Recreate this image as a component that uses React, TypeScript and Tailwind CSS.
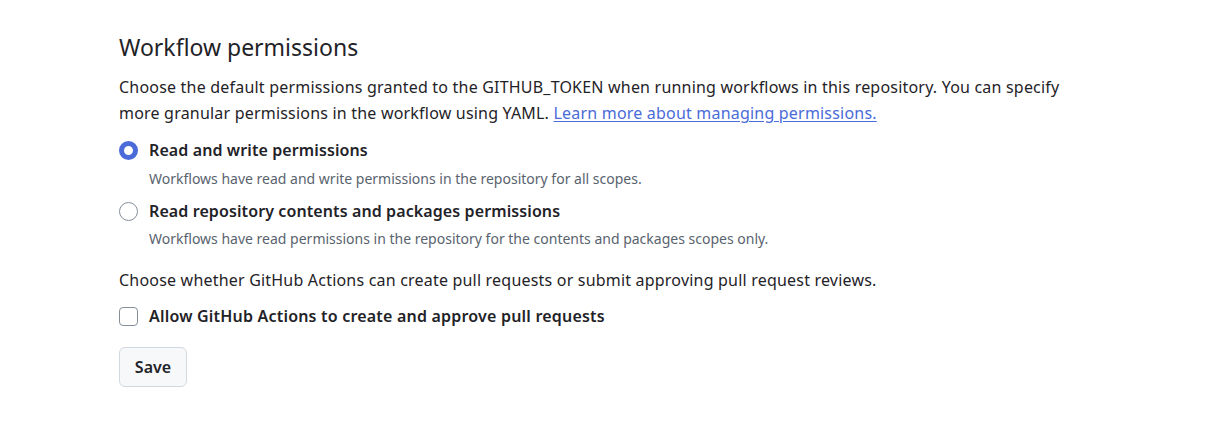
import React from "react";

export default function App() {
  return (
    <div className="w-[1216px] h-[437px] bg-white text-[#1f2328]" style={{ fontFamily: '"Noto Sans", "Open Sans", sans-serif' }}>
      <div className="pl-[119px] pt-[29px] w-[1100px]">
        <h2 className="text-[23px] leading-[36px] font-normal text-[#1f2328]">Workflow permissions</h2>
        <p className="mt-[9px] text-[16px] leading-[26px] tracking-[0.2px] w-[960px]">
          Choose the default permissions granted to the GITHUB_TOKEN when running workflows in this repository. You can specify more granular permissions in the workflow using YAML.{" "}
          <a className="text-[#4a6bd8] underline underline-offset-2">Learn more about managing permissions.</a>
        </p>
        <div className="mt-[12px] flex flex-col">
          <label className="flex items-center gap-[11px] h-[24px]">
            <span className="w-[19px] h-[19px] rounded-full border-[5px] border-[#4a6bd8] bg-white box-border" />
            <span className="text-[16px] font-semibold tracking-[0.1px]">Read and write permissions</span>
          </label>
          <div className="pl-[30px] mt-[7px] text-[14px] leading-[20px] text-[#59636e]">Workflows have read and write permissions in the repository for all scopes.</div>
          <label className="mt-[10px] flex items-center gap-[11px] h-[24px]">
            <span className="w-[19px] h-[19px] rounded-full border border-[#858f99] bg-white box-border" />
            <span className="text-[16px] font-semibold tracking-[0.1px]">Read repository contents and packages permissions</span>
          </label>
          <div className="pl-[30px] mt-[6px] text-[14px] leading-[20px] text-[#59636e]">Workflows have read permissions in the repository for the contents and packages scopes only.</div>
        </div>
        <p className="mt-[18px] text-[16px] leading-[26px] tracking-[0.2px]">Choose whether GitHub Actions can create pull requests or submit approving pull request reviews.</p>
        <label className="mt-[11px] flex items-center gap-[11px] h-[24px]">
          <span className="w-[19px] h-[19px] rounded-[4px] border border-[#858f99] bg-white box-border" />
          <span className="text-[16px] font-semibold tracking-[0.2px]">Allow GitHub Actions to create and approve pull requests</span>
        </label>
        <button className="mt-[19px] w-[68px] h-[40px] rounded-[6px] border border-[#d1d9e0] bg-[#f6f8fa] text-[16px] font-semibold text-[#1f2328]">Save</button>
      </div>
    </div>
  );
}
